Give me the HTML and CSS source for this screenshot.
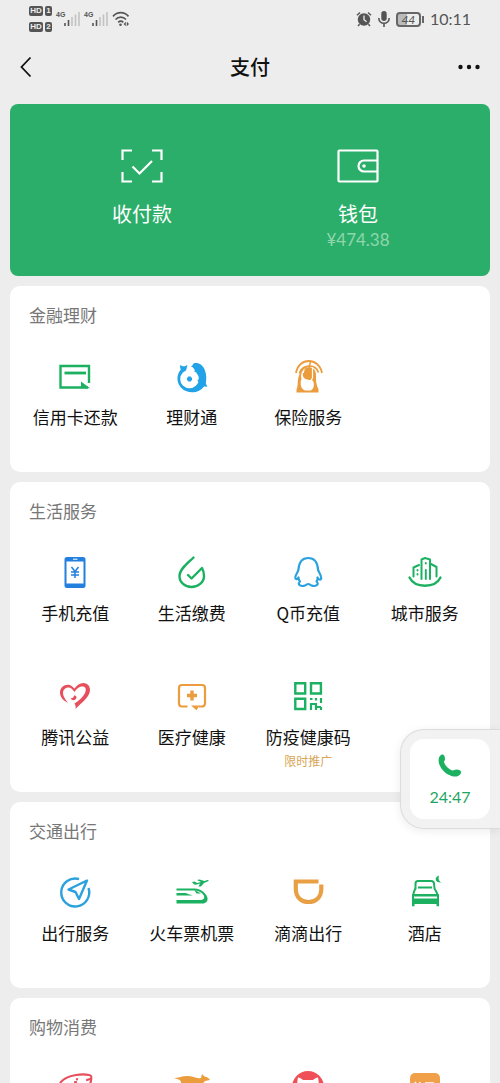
FILE: index.html
```html
<!DOCTYPE html>
<html lang="zh-CN">
<head>
<meta charset="utf-8">
<meta name="viewport" content="width=device-width, initial-scale=1">
<title>支付</title>
<link rel="stylesheet" href="styles.css">
</head>
<body>
<div class="app">
  <div class="status">
    <div class="status-side status-net">
      <div class="sims">
        <span class="sim"><b class="tag">HD</b><b class="tag tag-num">1</b></span>
        <span class="sim"><b class="tag">HD</b><b class="tag tag-num">2</b></span>
      </div>
      <span class="signal"><span class="net">4G</span>
        <svg width="16" height="16" viewBox="0 0 16 16"><path d="M1 12v3M4.500 9v6" stroke="#555" stroke-width="1.600"/><path d="M8 6v9M11.500 3.500V15M15 1v14" stroke="#c2c2c2" stroke-width="1.600"/></svg>
      </span>
      <span class="signal"><span class="net">4G</span>
        <svg width="16" height="16" viewBox="0 0 16 16"><path d="M1 12v3M4.500 9v6" stroke="#555" stroke-width="1.600"/><path d="M8 6v9M11.500 3.500V15M15 1v14" stroke="#c2c2c2" stroke-width="1.600"/></svg>
      </span>
      <svg width="18" height="16" viewBox="0 0 18 16" fill="none" stroke="#555" stroke-width="1.700"><path d="M1 5.300C5.500.500 12 .500 16.500 5.300M3.500 8.500c3-3.200 7.500-3.200 10.500 0M6.200 11.300c1.600-1.500 3.600-1.500 5 0"/><circle cx="8.500" cy="13.700" r="1.300" fill="#555" stroke="none"/><path d="M13.800 10.800v4.400l-2.200-2.200zM14.800 10.800v4.400L17 13z" fill="#555" stroke="none"/></svg>
    </div>
    <div class="status-side">
      <svg width="16" height="16" viewBox="0 0 16 16"><circle cx="8" cy="8.500" r="6.200" fill="#555"/><path d="M1 4.200 4 1.500M15 4.200l-3-2.700M3.600 13.200l-1.600 1.900M12.400 13.200l1.600 1.900" stroke="#555" stroke-width="1.500"/><path d="M8 4.500v4.200l2.600 2" stroke="#ededed" stroke-width="1.300" fill="none"/></svg>
      <svg width="12" height="16" viewBox="0 0 12 16"><rect x="3.300" width="5.400" height="10" rx="2.700" fill="#555"/><path d="M.800 7c0 7 10.400 7 10.400 0M6 12v4" fill="none" stroke="#555" stroke-width="1.600"/></svg>
      <span class="battery"><span class="battery-box">44</span><span class="battery-tip"></span></span>
      <time class="clock">10:11</time>
    </div>
  </div>

  <header class="nav">
    <button class="nav-btn" aria-label="返回"><svg width="12" height="22" viewBox="0 0 12 22" fill="none" stroke="#111" stroke-width="1.800"><path d="m10.500 1.500-9 9.500 9 9.500"/></svg></button>
    <h1 class="nav-title">支付</h1>
    <button class="nav-btn nav-more" aria-label="更多"><svg width="22" height="6" viewBox="0 0 22 6" fill="#111"><circle cx="2.500" cy="3" r="2.200"/><circle cx="11" cy="3" r="2.200"/><circle cx="19.500" cy="3" r="2.200"/></svg></button>
  </header>

  <main class="content">
    <section class="hero">
      <button class="hero-item">
        <svg width="42" height="34" viewBox="0 0 42 34" fill="none" stroke="#fff" stroke-width="2.200"><path d="M11 1.500H1.500V11M31 1.500h9.500V11M1.500 23v9.500H11M40.500 23v9.500H31M11.500 17.500l7 7L31 12"/></svg>
        <span class="hero-label">收付款</span>
      </button>
      <button class="hero-item">
        <svg width="42" height="34" viewBox="0 0 42 34" fill="none" stroke="#fff" stroke-width="2.200"><rect x="1.500" y="1.500" width="39" height="31" rx="1"/><path d="M40.500 11.500H27a5.500 5.500 0 0 0 0 11h13.500"/><circle cx="27" cy="17" r="1.800" fill="#fff" stroke="none"/></svg>
        <span class="hero-label">钱包</span>
        <span class="hero-amount">¥474.38</span>
      </button>
    </section>

    <section class="card">
      <h2 class="card-title">金融理财</h2>
      <div class="grid">
        <button class="tile">
          <svg class="icon green-line" viewBox="0 0 36 36"><path d="M32 24V7H3.500v21.500H31"/><path d="M7.500 14h21.500" stroke-width="2.800"/><path d="m24 22.500 9 6.700h-9z" fill="#1bb161" stroke="none"/></svg>
          <span class="label">信用卡还款</span>
        </button>
        <button class="tile">
          <svg class="icon" viewBox="0 0 36 36"><path d="M12.500 6.200C10 8 8.500 7.500 6.200 6c-.4 2 .2 3.300.6 4.600C4 14 3.200 17.500 3.500 21c.8 7 7 12.300 14.500 12.300 5 0 9.300-2.200 12-5.800l3.300.3-1.500-3.600c.8-4 .7-9-1-13.200C28.500 5.500 24 3 19.500 4.500L18 7z" fill="#22a3e8"/><circle cx="15.500" cy="20" r="9.300" fill="#fff"/><path d="M13.500 5.500 12 12h9c-1-2.500-2-4-4-4.500l2-3.500z" fill="#fff"/><path d="M15.500 17.500v5M13 20h5" stroke="#22a3e8" stroke-width="2.800"/><circle cx="24.500" cy="21.500" r="1" fill="#22a3e8"/></svg>
          <span class="label">理财通</span>
        </button>
        <button class="tile">
          <svg class="icon" viewBox="0 0 36 36" fill="none"><path d="M6.500 33.500v-3c2-3.500.5-9 2.500-14C11 11 15 8.500 20 8.500c5 .5 6.500 5 6 10 0 5 .5 7.500 2.500 12v3z" fill="#eb9c3c"/><path d="M17.500 20.500c3.500 1 5.500 0 6 2.500 1 4 0 7-2.500 8.500h-6c-4-1.500-5.500-7-3.500-11.500C10.500 16 11.500 11.500 15 10c-2 4.500-1.500 9 2.500 10.500z" fill="#fff"/><path d="M13.700 14v2.500c0 2 3 3.500 5 2.500 2.500-1 2.800-4 2.800-8.500" stroke="#eb9c3c" stroke-width="1.700"/><path d="M6 14C8.500-2 29-2 32 14M9.500 14.500C12 6 25 4 28.500 13.500" stroke="#eb9c3c" stroke-width="1.800"/><path d="M20.500 3c-2 5-1.500 8-1.500 17.500" stroke="#eb9c3c" stroke-width="1.500"/><path d="M22.500 8v11l-2.300 3.500" stroke="#fff" stroke-width="1.200"/></svg>
          <span class="label">保险服务</span>
        </button>
      </div>
    </section>

    <section class="card">
      <h2 class="card-title">生活服务</h2>
      <div class="grid">
        <button class="tile">
          <svg class="icon" viewBox="0 0 36 36" fill="none"><rect x="7.500" y="2" width="21" height="31" rx="2.500" fill="#2380df"/><path d="M9.500 6.500h17v22h-17z" fill="#fff"/><path d="M16 4.200h4.500" stroke="#fff"/><path d="m14.500 12 3.500 4.500 3.500-4.500M18 16.500V23M14 17h8M14 20h8" stroke="#2380df" stroke-width="1.500"/></svg>
          <span class="label">手机充值</span>
        </button>
        <button class="tile">
          <svg class="icon green-line" viewBox="0 0 36 36" stroke-linecap="round" stroke-linejoin="round"><path d="M19.500 2.500C14 8 5.500 14 5.500 21c0 6.500 5.500 11 12 11s12.500-4.500 12.500-11c0-3-.5-5.500-2-8L17.500 23.500l-3.500-3.500"/></svg>
          <span class="label">生活缴费</span>
        </button>
        <button class="tile">
          <svg class="icon" viewBox="0 0 36 36" fill="none" stroke="#2ba2de" stroke-width="2.200" stroke-linecap="round" stroke-linejoin="round"><path d="M8.500 22.500c-1 2.500-3.200 2-3.200 0 0-3 2.700-5 3.200-8C9 7 12.500 3 18.300 3s9.200 4 9.700 11.500c.5 3 3.200 5 3.200 8.500 0 2-2.200 2.500-3.700-.5M8.500 22.500c0 2 .5 3 1.500 4-3.500 3 1 5.500 5 4 1.500-.5 2-1.500 3.300-1.500s1.700 1 3.200 1.500c4 1.500 8.500-1 5-4 .8-1 1.300-2 1-4"/></svg>
          <span class="label">Q币充值</span>
        </button>
        <button class="tile">
          <svg class="icon green-line" viewBox="0 0 36 36" stroke-linecap="round" stroke-linejoin="round"><path d="M2.500 22.500c5.500 11 25.500 11 31 0"/><path d="M6.500 21.500v-9L12 10M14.500 24V4.500L18 3l5 1.500V24M24 9l5.500 3v9.500M23 9.500h1" stroke-width="2"/><path d="M18.800 8v.5M10.500 15v.5M10.500 19v.5M18.800 15v9" stroke-width="1.900"/></svg>
          <span class="label">城市服务</span>
        </button>
        <button class="tile">
          <svg class="icon" viewBox="0 0 36 36" fill="#e64f5c"><path d="M11 24C5.500 21 3 17.500 3 13.500 3 8 8 5 12.500 6c2 .5 3.500 2 5 3.500C20.500 5 25 2.800 29 4.500c4.500 2 5 7.500 2.500 11.500C28.500 21.500 23 25 18.500 30c.5-2.500 0-4-1-5.500 4.500-3 8.500-6.500 10.500-10.500 1.500-3.500 1-6-2-6.500-3.500-.5-6.500 2.500-8.500 5.500C15.500 10.500 14 8.500 11.500 8.500 8 8.500 6 11 6 14c0 3.500 2.500 6.500 5 10z"/><path d="M13.500 19c2 .5 3 0 3.500-2.500 1.500 0 2.500.5 2.500 2-.5 3-4.500 4-6 .5z"/></svg>
          <span class="label">腾讯公益</span>
        </button>
        <button class="tile">
          <svg class="icon" viewBox="0 0 36 36" fill="none" stroke="#eb9c3c" stroke-width="2.200"><path d="M13.500 27.500H8A3 3 0 0 1 5 24.500V9a3 3 0 0 1 3-3h20a3 3 0 0 1 3 3v15.500a3 3 0 0 1-3 3h-3"/><path d="M18 11.500v10M13 16.500h10" stroke-width="3.400"/><path d="M17 26.500h8.500l-3 4.800z" fill="#eb9c3c" stroke="none"/></svg>
          <span class="label">医疗健康</span>
        </button>
        <button class="tile">
          <svg class="icon green-line" viewBox="0 0 36 36"><path d="M5.300 4.300h9.900v10.200H5.300zM21 4.300h9.900v10.200H21zM5.300 19.800h9.900V30H5.300z"/><path d="M21 31v-6h5v3h5M31 19v5M31 28v3M26 19v2.500M20 20h2.500M26 31v-3" stroke-width="2.200"/></svg>
          <span class="label">防疫健康码</span>
          <span class="promo">限时推广</span>
        </button>
      </div>
    </section>

    <section class="card">
      <h2 class="card-title">交通出行</h2>
      <div class="grid">
        <button class="tile">
          <svg class="icon" viewBox="0 0 36 36" fill="none" stroke="#2ba2de" stroke-width="2.400" stroke-linejoin="round"><path d="M22 4A14 14 0 1 0 31.500 13"/><path d="M30 5.500 11.500 14.500l7 2.500 3.500 7z"/></svg>
          <span class="label">出行服务</span>
        </button>
        <button class="tile">
          <svg class="icon" viewBox="0 0 36 36" fill="#1bb161"><path d="M2.500 13.500h18c7 .5 12 5 13 9.500.5 3-1.500 5.500-5 5.500h-26V25H26c3 0 5-1.500 4-4-1-3-5-5.500-10-5.500H2.500z"/><path d="M2.500 18h9l7 2.500h-16zM20 14.500l7 4h-4.500z"/><path d="m18 7 2.500-.5 2.500 1.500 4-1-4-2 2.500-.5 5 1.500 3-1c1.500-.5 1.500 1 0 1.500l-3.500 1.500-3 3.500h-2.500l1.500-3-4 1.200c-1.500.3-3-1.200-4-2.700z"/></svg>
          <span class="label">火车票机票</span>
        </button>
        <button class="tile">
          <svg class="icon" viewBox="0 0 36 36" fill="none"><path d="M28.500 6.500H5.800V14C5.800 22.500 11.500 27 18.500 27S31.300 22.500 31.300 14V9.500" stroke="#e9a044" stroke-width="4.200"/></svg>
          <span class="label">滴滴出行</span>
        </button>
        <button class="tile">
          <svg class="icon green-line" viewBox="0 0 36 36" stroke-linejoin="round"><path d="M8.500 14.500V8.500C8.500 7 9.500 6 11 6h13c2 0 3 1 3 2.500l.5 5c1.500 2.500 3.500 5.500 3.500 8.500M8.500 13c-1.500 3-2.500 6-2.500 9M11 12.500h14M6 20h25" stroke-width="2"/><path d="M5 19h27v12.300h-2.500V29h-22v2.300H5z" fill="#1bb161" stroke="none"/><path d="M7 22.500h23" stroke="#fff" stroke-width="2"/><path d="M32 .5c-5 1.500-4.500 7.500 2.800 7-2.300-.5-4-3-2.800-7z" fill="#1bb161" stroke="none"/></svg>
          <span class="label">酒店</span>
        </button>
      </div>
    </section>

    <section class="card">
      <h2 class="card-title">购物消费</h2>
      <div class="grid">
        <button class="tile" aria-label="特卖">
          <svg class="icon" viewBox="0 0 36 36" fill="none" stroke="#e64f5c" stroke-width="2.200"><path d="M3 12c3-4 9-7 16-8 7-1 14-.5 15 1s0 5-1 9M3 12l4 2"/><path d="M20 8v.5M18 11h1M33 8l-3 1" stroke-linecap="round"/></svg>
        </button>
        <button class="tile" aria-label="拼购">
          <svg class="icon" viewBox="0 0 36 36" fill="#eb9c3c"><path d="M0 7c5 0 8-2 13-2 6 0 9 3 14 2l1-4 2.500 2.500C33 6 35 7 36 9l-5 1-7 8H10L6 9z"/></svg>
        </button>
        <button class="tile" aria-label="精选">
          <svg class="icon" viewBox="0 0 36 36"><circle cx="18" cy="16" r="16" fill="#f04f58"/><path d="M8 6.500c2 0 4 1.500 5 2.500h10c1-1 3-2.500 5-2.500 1 4 1 8 0 14H8c-1-6-1-10 0-14z" fill="#fff"/></svg>
        </button>
        <button class="tile" aria-label="优选">
          <svg class="icon" viewBox="0 0 36 36"><rect x="3" y="2" width="30" height="30" rx="5" fill="#f0a048"/><path d="m8 11 2 3M13 11l-1 3M18 12h9M22 12v4" stroke="#fff" stroke-width="1.500"/></svg>
        </button>
      </div>
    </section>
  </main>

  <button class="call">
    <span class="call-inner">
      <svg width="24" height="24" viewBox="0 0 24 24" fill="#1bb161"><path d="M3 1C5.500-.500 7 2 7 5c0 1.500-1 2-1 3 1 3.500 5 7.500 8.500 8.500 1.500 0 2-1 4-1 3 0 5.500 1.500 4.300 4-1.500 3-5.300 3.800-9.300 2.500C7.500 20 2 14.500.800 8.500.300 5.500.800 2.500 3 1z"/></svg>
      <span class="call-time">24:47</span>
    </span>
  </button>
</div>
</body>
</html>
```
FILE: styles.css
```css
* {
  box-sizing: border-box;
}

body {
  margin: 0;
  background: #ededed;
  color: #111;
  font-family: "Noto Sans CJK SC", sans-serif;
}

button {
  margin: 0;
  padding: 0;
  border: 0;
  background: none;
  color: inherit;
  font: inherit;
}

svg {
  display: block;
  flex: none;
}

.app {
  position: relative;
  height: 100vh;
  overflow: hidden;
}

.status {
  display: flex;
  justify-content: space-between;
  align-items: center;
  height: 38px;
  padding: 0 29px;
  color: #555;
}

.status-side {
  display: flex;
  align-items: center;
  gap: 6px;
}

.status-net {
  gap: 4px;
}

.sims {
  display: flex;
  flex-direction: column;
  gap: 6px;
}

.sim {
  display: flex;
  gap: 2px;
}

.tag {
  width: 14px;
  border-radius: 2px;
  background: #555;
  color: #ededed;
  font: bold 8px/10px "Liberation Sans", sans-serif;
  text-align: center;
}

.tag-num {
  width: 7px;
}

.signal {
  display: flex;
  align-items: center;
}

.net {
  align-self: flex-start;
  width: 8px;
  font: bold 7px/8px "Liberation Sans", sans-serif;
}

.battery {
  display: flex;
  align-items: center;
  gap: 1px;
}

.battery-box {
  width: 25px;
  border: 2px solid #666;
  border-radius: 4px;
  background: linear-gradient(90deg, #bbb 44%, #ededed 44%);
  font: italic 12px/11px Lato, sans-serif;
  text-align: center;
}

.battery-tip {
  width: 2px;
  height: 7px;
  background: #666;
}

.clock {
  font: 16px/20px Lato, sans-serif;
}

.nav {
  display: flex;
  justify-content: space-between;
  align-items: center;
  height: 58px;
  padding: 0 20px;
}

.content {
  display: flex;
  flex-direction: column;
  gap: 10px;
  padding: 8px 10px;
}

.nav-btn {
  display: flex;
  width: 24px;
}

.nav-more {
  justify-content: flex-end;
}

.nav-title {
  margin: 0;
  font-size: 20px;
  font-weight: 500;
  line-height: 28px;
}

.hero {
  display: grid;
  grid-template-columns: 1fr 1fr;
  padding: 45px 24px 24px;
  border-radius: 8px;
  background: #2bae69;
  color: #fff;
}

.hero-item {
  display: flex;
  flex-direction: column;
  align-items: center;
}

.hero-label {
  margin-top: 17px;
  font-size: 20px;
  line-height: 28px;
}

.hero-amount {
  font: 17px/24px Lato, sans-serif;
  color: #90d6ad;
}

.card {
  padding: 0 7px 4px;
  border-radius: 10px;
  background: #fff;
}

.card-title {
  margin: 0;
  padding: 17px 12px;
  color: #777;
  font-size: 17px;
  font-weight: 400;
  line-height: 24px;
}

.grid {
  display: grid;
  grid-template-columns: repeat(4, 1fr);
  grid-auto-rows: 124px;
}

.tile {
  display: flex;
  flex-direction: column;
  align-items: center;
  padding-top: 15px;
}

.icon {
  width: 36px;
  height: 36px;
}

.green-line {
  fill: none;
  stroke: #1bb161;
  stroke-width: 2.4;
}

.label {
  margin-top: 10px;
  font-size: 17px;
  line-height: 24px;
  white-space: nowrap;
}

.promo {
  color: #d9a657;
  font-size: 12px;
  line-height: 24px;
}

.call {
  position: absolute;
  top: 729px;
  right: 0;
  padding: 9px 10px 9px 9px;
  border: 1px solid #dcdcdc;
  border-right: 0;
  border-radius: 24px 0 0 24px;
  background: rgba(241, 241, 241, 0.92);
  box-shadow: 0 2px 10px rgba(0, 0, 0, 0.08);
}

.call-inner {
  display: flex;
  flex-direction: column;
  align-items: center;
  gap: 8px;
  width: 80px;
  height: 80px;
  padding-top: 15px;
  border-radius: 14px;
  background: #fff;
}

.call-time {
  color: #1fa663;
  font: 16px/22px Lato, sans-serif;
}
```
